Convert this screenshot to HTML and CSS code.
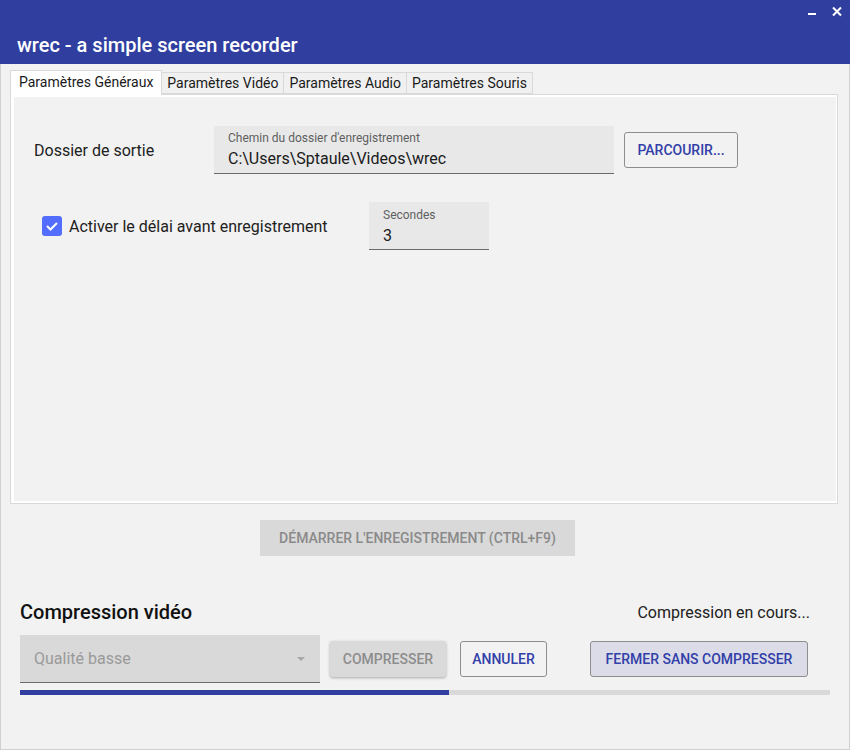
FILE: index.html
```html
<!DOCTYPE html>
<html lang="fr">
<head>
<meta charset="utf-8">
<title>wrec - a simple screen recorder</title>
<link rel="stylesheet" href="styles.css">
</head>
<body>
<div class="window">
  <header class="titlebar">
    <div class="controls">
      <svg class="ctl" width="12" height="12" viewBox="0 0 12 12"><rect x="2" y="7" width="8" height="2" fill="#fff"/></svg>
      <svg class="ctl" width="12" height="12" viewBox="0 0 12 12"><path d="M2 1.5 L10 9.5 M10 1.5 L2 9.5" stroke="#fff" stroke-width="2"/></svg>
    </div>
    <h1 class="title">wrec - a simple screen recorder</h1>
  </header>
  <main class="content">
    <div class="tabs">
      <div class="tabstrip">
        <div class="tab tab-active">Paramètres Généraux</div>
        <div class="tab">Paramètres Vidéo</div>
        <div class="tab">Paramètres Audio</div>
        <div class="tab">Paramètres Souris</div>
      </div>
      <div class="tabpanel">
        <div class="panel-inner">
          <div class="row row-folder">
            <span class="row-label">Dossier de sortie</span>
            <div class="field field-path">
              <span class="field-label">Chemin du dossier d'enregistrement</span>
              <span class="field-value">C:\Users\Sptaule\Videos\wrec</span>
            </div>
            <button class="btn btn-outline btn-browse">PARCOURIR...</button>
          </div>
          <div class="row row-delay">
            <label class="check-wrap">
              <span class="checkbox">
                <svg width="20" height="20" viewBox="0 0 20 20"><path d="M5 10 L8.5 13.5 L15 7" fill="none" stroke="#fff" stroke-width="2"/></svg>
              </span>
              <span class="check-label">Activer le délai avant enregistrement</span>
            </label>
            <div class="field field-seconds">
              <span class="field-label">Secondes</span>
              <span class="field-value">3</span>
            </div>
          </div>
        </div>
      </div>
    </div>
    <div class="start-row">
      <button class="btn btn-start">DÉMARRER L'ENREGISTREMENT (CTRL+F9)</button>
    </div>
    <section class="compression">
      <div class="comp-head">
        <h2 class="comp-title">Compression vidéo</h2>
        <span class="comp-status">Compression en cours...</span>
      </div>
      <div class="comp-controls">
        <div class="combo">
          <span class="combo-value">Qualité basse</span>
          <span class="combo-arrow"></span>
        </div>
        <button class="btn btn-disabled">COMPRESSER</button>
        <button class="btn btn-outline btn-cancel">ANNULER</button>
        <button class="btn btn-outline btn-close">FERMER SANS COMPRESSER</button>
      </div>
      <div class="progress"><div class="progress-fill" style="width:53%"></div></div>
    </section>
  </main>
</div>
</body>
</html>
```

FILE: styles.css
```css
* { box-sizing: border-box; }
html, body { margin: 0; padding: 0; }
body {
  width: 850px;
  height: 750px;
  overflow: hidden;
  font-family: Roboto, "Liberation Sans", sans-serif;
  color: #212121;
  background: #f2f2f2;
}
.window {
  width: 850px;
  height: 750px;
  display: flex;
  flex-direction: column;
}
.titlebar {
  height: 64px;
  background: #303f9f;
  color: #fff;
  display: flex;
  flex-direction: column;
  flex-shrink: 0;
}
.controls {
  display: flex;
  justify-content: flex-end;
  gap: 13px;
  padding: 6px 7px 0 0;
}
.ctl { display: block; }
.title {
  margin: auto 0 0 0;
  padding: 0 0 7px 17px;
  font-size: 20px;
  font-weight: 500;
  line-height: 24px;
}
.content {
  flex: 1;
  border: 1px solid #d0d0d0;
  border-top: none;
  display: flex;
  flex-direction: column;
}
.tabs {
  margin: 6px 0 0 9px;
  width: 828px;
}
.tabstrip {
  display: flex;
  align-items: flex-end;
  height: 24px;
}
.tab {
  height: 22px;
  padding: 0 5px;
  font-size: 14px;
  line-height: 20px;
  background: #f0f0f0;
  border: 1px solid #d9d9d9;
  border-left: none;
  color: #1a1a1a;
  white-space: nowrap;
}
.tab-active {
  height: 25px;
  margin-bottom: -1px;
  padding: 1px 8px 0 8px;
  background: #fff;
  border-left: 1px solid #d9d9d9;
  border-bottom: none;
  position: relative;
  z-index: 1;
}
.tabpanel {
  height: 410px;
  border: 1px solid #d9d9d9;
  background: #fff;
  padding: 2px 1px 2px 3px;
}
.panel-inner {
  height: 100%;
  background: #f2f2f2;
  padding: 29px 20px 0 20px;
}
.row {
  display: flex;
  align-items: center;
}
.row-label {
  width: 180px;
  font-size: 16px;
}
.field {
  background: #e8e8e8;
  border-bottom: 1px solid #6b6b6b;
  height: 48px;
  padding: 5px 14px 0 14px;
  display: flex;
  flex-direction: column;
}
.field-label {
  font-size: 12px;
  color: #5f5f5f;
  line-height: 14px;
}
.field-value {
  margin-top: 4px;
  font-size: 16px;
  line-height: 19px;
  color: #1a1a1a;
}
.field-path { width: 400px; }
.field-seconds { width: 120px; padding-top: 6px; }
.btn {
  font-family: Roboto, "Liberation Sans", sans-serif;
  font-size: 14px;
  font-weight: 500;
  height: 36px;
  border-radius: 3px;
  padding: 0 12px;
  background: transparent;
  border: 1px solid #8e8e8e;
  color: #3240a8;
  white-space: nowrap;
}
.btn-browse {
  margin-left: 10px;
  width: 114px;
  padding: 0;
}
.row-delay {
  margin-top: 28px;
  padding-left: 8px;
}
.check-wrap {
  width: 327px;
  display: flex;
  align-items: center;
  gap: 7px;
}
.checkbox {
  width: 20px;
  height: 20px;
  background: #536dfe;
  border-radius: 3px;
  display: block;
}
.checkbox svg { display: block; }
.check-label { font-size: 16px; }
.start-row {
  margin-top: 16px;
  padding-left: 259px;
}
.btn-start {
  width: 315px;
  background: #d9d9d9;
  border: none;
  border-radius: 0;
  color: #8a8a8a;
  padding: 0;
}
.compression {
  padding: 0 19px 0 19px;
  margin-top: 44px;
}
.comp-head {
  display: flex;
  justify-content: space-between;
  align-items: center;
  height: 24px;
}
.comp-title {
  margin: 0;
  font-size: 20px;
  font-weight: 500;
  line-height: 24px;
  color: #111;
}
.comp-status {
  font-size: 16px;
  margin-right: 20px;
}
.comp-controls {
  margin-top: 11px;
  display: flex;
  align-items: center;
}
.combo {
  width: 300px;
  height: 48px;
  background: #d9d9d9;
  border-bottom: 1px solid #6b6b6b;
  display: flex;
  align-items: center;
  justify-content: space-between;
  padding: 0 14px 0 14px;
}
.combo-value {
  font-size: 16px;
  color: #9a9a9a;
}
.combo-arrow {
  width: 0;
  height: 0;
  border-left: 4px solid transparent;
  border-right: 4px solid transparent;
  border-top: 4px solid #a8a8a8;
  margin-right: 1px;
}
.btn-disabled {
  margin-left: 10px;
  width: 116px;
  padding: 0;
  background: #dadada;
  border: none;
  color: #8d8d8d;
  box-shadow: 0 1px 3px rgba(0,0,0,0.3);
}
.btn-cancel {
  margin-left: 14px;
  width: 87px;
  padding: 0;
}
.btn-close {
  margin-left: 43px;
  width: 218px;
  padding: 0;
  background: #dcdce8;
}
.progress {
  margin-top: 7px;
  height: 5px;
  width: 810px;
  background: #d9d9d9;
}
.progress-fill {
  height: 100%;
  background: #303f9f;
}
```
